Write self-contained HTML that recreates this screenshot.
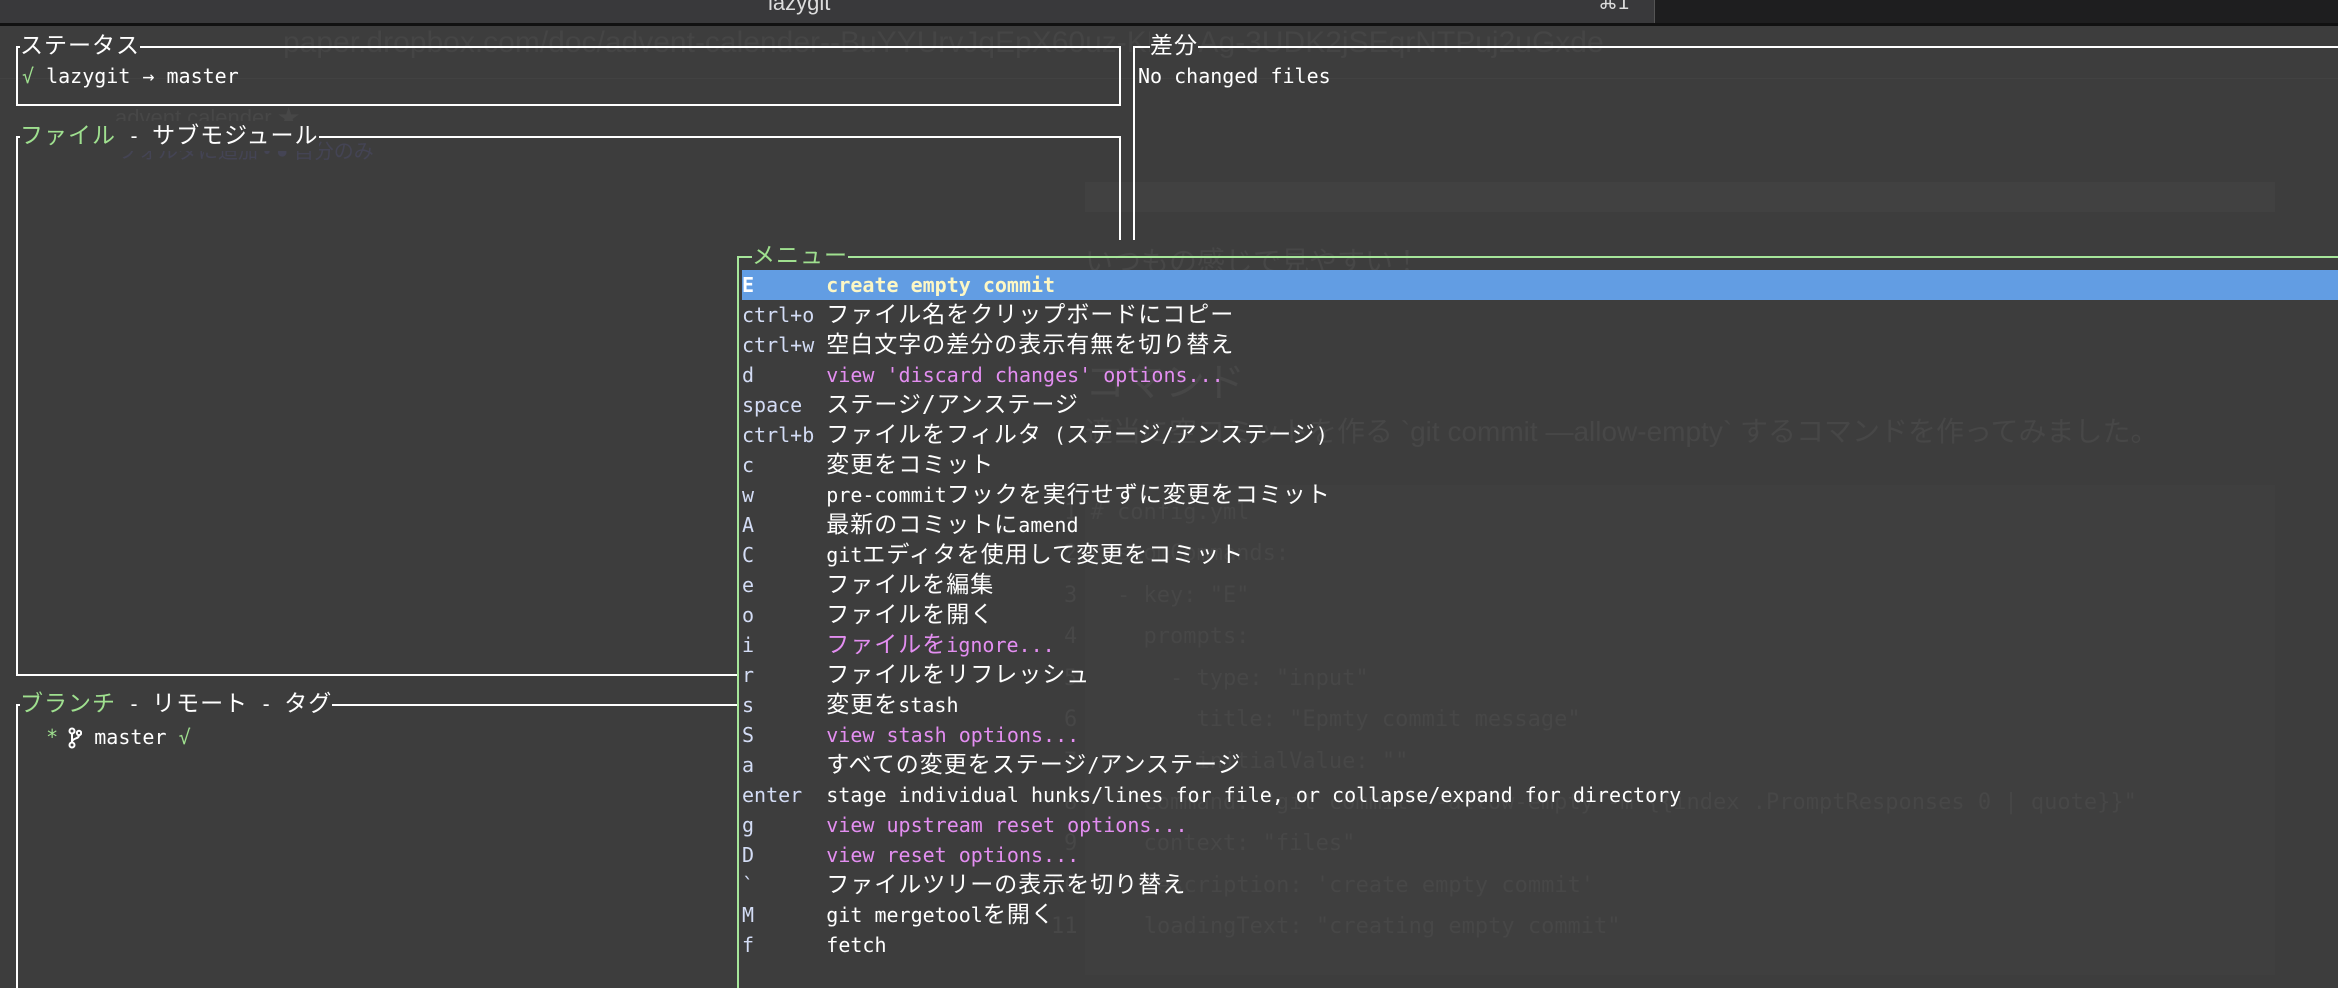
<!DOCTYPE html>
<html><head><meta charset="utf-8"><style>
*{margin:0;padding:0;box-sizing:border-box}
body{width:2338px;height:988px;background:#3d3d3d;overflow:hidden;position:relative;font-family:"DejaVu Sans Mono","Liberation Mono","Noto Sans CJK JP",monospace;font-size:20px;color:#fff}
.a{position:absolute;white-space:pre;line-height:30px;height:30px}
.j{letter-spacing:1px;font-size:23px;line-height:20px}
.g{color:#9fe08f}
.m{color:#e38ef1}
.k{color:#d3dcf5}
.ln{position:absolute;background:#fff}
.gl{position:absolute;background:#a6e69a}
.t{background:#3d3d3d}
.gh{position:absolute;white-space:pre;color:#474747;font-family:"Liberation Sans","Noto Sans CJK JP",sans-serif}
.gc{position:absolute;white-space:pre;color:#474747;font-family:"DejaVu Sans Mono",monospace;font-size:22px}
</style></head><body>
<div style="position:absolute;left:0;top:0;width:2338px;height:24px;background:#39393b"></div>
<div style="position:absolute;left:1655px;top:0;width:683px;height:24px;background:#1e1e1f"></div>
<div style="position:absolute;left:1654px;top:0;width:1px;height:24px;background:#555"></div>
<div style="position:absolute;left:0;top:23px;width:2338px;height:3px;background:#111"></div>
<div class="a" style="left:768px;top:-12px;font-family:'Liberation Sans',sans-serif;font-size:22px;color:#ddd">lazygit</div>
<div class="a" style="left:1598px;top:-12px;font-family:'Liberation Sans',sans-serif;font-size:20px;color:#ddd">⌘1</div>

<div class="gh" style="left:283px;top:26px;font-size:30px;color:#454545">paper.dropbox.com/doc/advent-calender--BuYYUrvJqEpX60uz-KLAxAg-3UDK2jSEqrNTPuj2uGxde</div>
<div style="position:absolute;left:0;top:78px;width:2338px;height:1px;background:#424242"></div>
<div class="gh" style="left:115px;top:100px;font-size:22px">advent calender ★</div>
<div class="gh" style="left:118px;top:135px;font-size:20px;color:#444454">フォルダに追加 • ● 自分のみ</div>
<div style="position:absolute;left:1085px;top:182px;width:1190px;height:30px;background:#414141"></div>

<div class="ln" style="left:16px;top:46px;width:1105px;height:2px"></div>
<div class="ln" style="left:16px;top:104px;width:1105px;height:2px"></div>
<div class="ln" style="left:16px;top:46px;width:2px;height:60px"></div>
<div class="ln" style="left:1119px;top:46px;width:2px;height:60px"></div>
<div class="a t" style="left:20px;top:31px"><span class="j">ステータス</span></div>
<div class="a" style="left:22px;top:61px"><span class="g">√</span> lazygit → master</div>

<div class="ln" style="left:16px;top:136px;width:1105px;height:2px"></div>
<div class="ln" style="left:16px;top:136px;width:2px;height:540px"></div>
<div class="ln" style="left:16px;top:674px;width:722px;height:2px"></div>
<div class="ln" style="left:1119px;top:136px;width:2px;height:104px"></div>
<div class="a t" style="left:20px;top:121px"><span class="g j">ファイル</span> - <span class="j">サブモジュール</span></div>

<div class="ln" style="left:1133px;top:46px;width:1205px;height:2px"></div>
<div class="ln" style="left:1133px;top:46px;width:2px;height:194px"></div>
<div class="a t" style="left:1150px;top:31px"><span class="j">差分</span></div>
<div class="a" style="left:1138px;top:61px">No changed files</div>

<div class="ln" style="left:16px;top:704px;width:722px;height:2px"></div>
<div class="ln" style="left:16px;top:704px;width:2px;height:284px"></div>
<div class="a t" style="left:20px;top:689px"><span class="g j">ブランチ</span> - <span class="j">リモート</span> - <span class="j">タグ</span></div>
<div class="a" style="left:22px;top:722px">  <span class="g">*</span>   master <span class="g">√</span></div>
<svg style="position:absolute;left:68px;top:727px" width="14" height="22" viewBox="0 0 14 22"><g fill="none" stroke="#fff" stroke-width="2"><circle cx="4" cy="4" r="2.5"/><circle cx="4" cy="18" r="2.5"/><circle cx="11" cy="6" r="2.2"/><path d="M4 6.5V15.5M11 8.5C11 12 4 11 4 15"/></g></svg>

<div class="gh" style="left:1085px;top:240px;font-size:28px">いつもの感じで見やすい！</div>
<div class="gh" style="left:1085px;top:350px;font-size:40px">コマンド</div>
<div class="gh" style="left:1085px;top:410px;font-size:28px">適当に空コミットを作る `git commit —allow-empty` するコマンドを作ってみました。</div>
<div style="position:absolute;left:1085px;top:485px;width:1190px;height:490px;background:#3f3f3f"></div>
<div class="gc" style="left:1064px;top:500px">1 # config.yml</div>
<div class="gc" style="left:1064px;top:541px">2 customCommands:</div>
<div class="gc" style="left:1064px;top:583px">3   - key: "E"</div>
<div class="gc" style="left:1064px;top:624px">4     prompts:</div>
<div class="gc" style="left:1064px;top:666px">5       - type: "input"</div>
<div class="gc" style="left:1064px;top:707px">6         title: "Epmty commit message"</div>
<div class="gc" style="left:1064px;top:749px">7         initialValue: ""</div>
<div class="gc" style="left:1064px;top:790px">8     command: "git commit --allow-empty -m {{index .PromptResponses 0 | quote}}"</div>
<div class="gc" style="left:1064px;top:831px">9     context: "files"</div>
<div class="gc" style="left:1051px;top:873px">10     description: 'create empty commit'</div>
<div class="gc" style="left:1051px;top:914px">11     loadingText: "creating empty commit"</div>

<div class="gl" style="left:737px;top:256px;width:1601px;height:2px"></div>
<div class="gl" style="left:737px;top:256px;width:2px;height:732px"></div>
<div class="a t g" style="left:752px;top:241px"><span class="j">メニュー</span></div>
<div style="position:absolute;left:742px;top:270px;width:1596px;height:30px;background:#629de3"></div>
<div class="a" style="left:742px;top:270px;font-weight:bold"><span style="color:#fff">E</span>      <span style="color:#fdf7c4">create empty commit</span></div>
<div class="a" style="left:742px;top:300px"><span class="k">ctrl+o</span> <span class="j">ファイル名をクリップボードにコピー</span></div>
<div class="a" style="left:742px;top:330px"><span class="k">ctrl+w</span> <span class="j">空白文字の差分の表示有無を切り替え</span></div>
<div class="a" style="left:742px;top:360px"><span class="k">d</span>      <span class="m">view 'discard changes' options...</span></div>
<div class="a" style="left:742px;top:390px"><span class="k">space</span>  <span class="j">ステージ/アンステージ</span></div>
<div class="a" style="left:742px;top:420px"><span class="k">ctrl+b</span> <span class="j">ファイルをフィルタ</span> (<span class="j">ステージ</span>/<span class="j">アンステージ</span>)</div>
<div class="a" style="left:742px;top:450px"><span class="k">c</span>      <span class="j">変更をコミット</span></div>
<div class="a" style="left:742px;top:480px"><span class="k">w</span>      pre-commit<span class="j">フックを実行せずに変更をコミット</span></div>
<div class="a" style="left:742px;top:510px"><span class="k">A</span>      <span class="j">最新のコミットに</span>amend</div>
<div class="a" style="left:742px;top:540px"><span class="k">C</span>      git<span class="j">エディタを使用して変更をコミット</span></div>
<div class="a" style="left:742px;top:570px"><span class="k">e</span>      <span class="j">ファイルを編集</span></div>
<div class="a" style="left:742px;top:600px"><span class="k">o</span>      <span class="j">ファイルを開く</span></div>
<div class="a" style="left:742px;top:630px"><span class="k">i</span>      <span class="m"><span class="j">ファイルを</span>ignore...</span></div>
<div class="a" style="left:742px;top:660px"><span class="k">r</span>      <span class="j">ファイルをリフレッシュ</span></div>
<div class="a" style="left:742px;top:690px"><span class="k">s</span>      <span class="j">変更を</span>stash</div>
<div class="a" style="left:742px;top:720px"><span class="k">S</span>      <span class="m">view stash options...</span></div>
<div class="a" style="left:742px;top:750px"><span class="k">a</span>      <span class="j">すべての変更をステージ</span>/<span class="j">アンステージ</span></div>
<div class="a" style="left:742px;top:780px"><span class="k">enter</span>  stage individual hunks/lines for file, or collapse/expand for directory</div>
<div class="a" style="left:742px;top:810px"><span class="k">g</span>      <span class="m">view upstream reset options...</span></div>
<div class="a" style="left:742px;top:840px"><span class="k">D</span>      <span class="m">view reset options...</span></div>
<div class="a" style="left:742px;top:870px"><span class="k">`</span>      <span class="j">ファイルツリーの表示を切り替え</span></div>
<div class="a" style="left:742px;top:900px"><span class="k">M</span>      git mergetool<span class="j">を開く</span></div>
<div class="a" style="left:742px;top:930px"><span class="k">f</span>      fetch</div>
</body></html>
